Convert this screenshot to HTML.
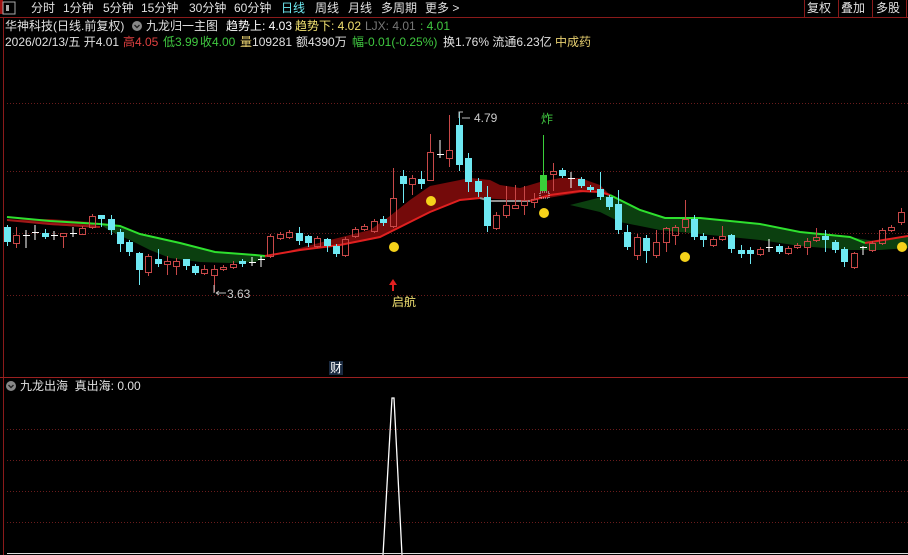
<!DOCTYPE html>
<html><head><meta charset="utf-8"><style>
html,body{margin:0;padding:0;background:#000;width:908px;height:555px;overflow:hidden}
body{position:relative;font-family:"Liberation Sans","Noto Sans CJK SC",sans-serif;font-size:12px;color:#e0e0e0}
.t{position:absolute;white-space:nowrap;line-height:14px}
svg{position:absolute;left:0;top:0}
</style></head><body>
<svg id="s" width="908" height="555" xmlns="http://www.w3.org/2000/svg">
<line x1="0" y1="17.5" x2="908" y2="17.5" stroke="#8a1a1a"/>
<line x1="3.5" y1="18" x2="3.5" y2="555" stroke="#8a1a1a"/>
<line x1="0" y1="377.5" x2="908" y2="377.5" stroke="#9a2020"/>
<line x1="804.5" y1="0" x2="804.5" y2="17" stroke="#8a1a1a"/>
<line x1="838.5" y1="0" x2="838.5" y2="17" stroke="#8a1a1a"/>
<line x1="872.5" y1="0" x2="872.5" y2="17" stroke="#8a1a1a"/>
<line x1="906.5" y1="0" x2="906.5" y2="17" stroke="#8a1a1a"/>
<g stroke="#6a1c1c" stroke-dasharray="1,2">
<line x1="7" y1="103.5" x2="908" y2="103.5"/>
<line x1="7" y1="171.5" x2="908" y2="171.5"/>
<line x1="7" y1="233.5" x2="908" y2="233.5"/>
<line x1="7" y1="295.5" x2="908" y2="295.5"/>
<line x1="7" y1="429.5" x2="908" y2="429.5"/>
<line x1="7" y1="460.5" x2="908" y2="460.5"/>
<line x1="7" y1="491.5" x2="908" y2="491.5"/>
<line x1="7" y1="522.5" x2="908" y2="522.5"/>
</g>
<rect x="0" y="0" width="3" height="14" fill="#a01010"/>
<polygon fill="#0b3f0f" points="100,224 120,226 140,234 180,243 215,252 255,255 270,256 255,262 230,263 200,262 170,258 150,250 130,240 110,231"/>
<polygon fill="#0b3f0f" points="610,195 640,210 665,218 700,218 760,224 800,232 850,237 880,242 908,236 908,248 880,250 850,250 800,246 760,240 700,234 660,230 620,222 600,212 570,205"/>
<polygon fill="#740a0a" points="270,256 300,250 340,245 380,237 410,222 430,212 460,200 480,198 530,201 560,196 590,191 610,195 600,185 580,178 560,178 540,182 520,188 500,185 490,180 470,178 450,182 430,186 410,200 390,216 370,230 330,240 300,248"/>
<polygon fill="#740a0a" points="7,220 50,225 100,228 90,222 50,219"/>
<polyline fill="none" stroke="#a01818" stroke-width="2" points="7,220 50,224 100,227"/>
<polyline fill="none" stroke="#2ee02e" stroke-width="2" points="7,217 50,221 100,224 120,226 140,234 180,243 215,252 255,255 265,256"/>
<polyline fill="none" stroke="#e02020" stroke-width="2" points="265,256 300,250 340,245 380,237 410,222 430,212 460,200 480,198"/>
<polyline fill="none" stroke="#909090" stroke-width="2" points="480,198 490,201 530,201"/>
<polyline fill="none" stroke="#e02020" stroke-width="2" points="530,201 550,195 580,191 600,192 610,195"/>
<polyline fill="none" stroke="#2ee02e" stroke-width="2" points="610,195 640,210 665,218 700,218 760,224 800,232 850,237 865,243"/>
<polyline fill="none" stroke="#e02020" stroke-width="2" points="865,243 908,236"/>
<g id="c"></g>
<g fill="#f5d21a"><circle cx="394" cy="247" r="5"/><circle cx="431" cy="201" r="5"/><circle cx="544" cy="213" r="5"/><circle cx="685" cy="257" r="5"/><circle cx="902" cy="247" r="5"/></g>
<path d="M393 279 L389 285 L392 285 L392 291 L394 291 L394 285 L397 285 Z" fill="#e02020"/>
<rect x="540" y="192" width="9" height="6" fill="none" stroke="#ddd" stroke-dasharray="1,1"/>
<path d="M214 293 L214 285 M216 293 L226 293 M216 293 L219 291 M216 293 L219 295" stroke="#bbb" fill="none"/>
<path d="M459 118 L459 112 L463 112 M462 118 L470 118" stroke="#bbb" fill="none"/>
<polyline fill="none" stroke="#fff" stroke-width="1.3" points="383,555 392,398 394,398 402,555"/>
<line x1="7" y1="553.5" x2="908" y2="553.5" stroke="#ddd"/>
<circle cx="11" cy="386" r="5" fill="#888"/>
<path d="M8.5 385 L11 387.5 L13.5 385" stroke="#222" stroke-width="1.4" fill="none"/>
<circle cx="137" cy="26" r="5" fill="#888"/>
<path d="M134.5 25 L137 27.5 L139.5 25" stroke="#222" stroke-width="1.4" fill="none"/>
<rect x="3" y="2" width="12" height="12" fill="none" stroke="#aaa"/>
<rect x="6" y="5" width="3" height="6" fill="#aaa"/>
<rect x="329" y="361" width="14" height="14" fill="#1a2a40"/>
</svg>
<div class="t" style="left:31px;top:1px">分时</div>
<div class="t" style="left:63px;top:1px">1分钟</div>
<div class="t" style="left:103px;top:1px">5分钟</div>
<div class="t" style="left:141px;top:1px">15分钟</div>
<div class="t" style="left:189px;top:1px">30分钟</div>
<div class="t" style="left:234px;top:1px">60分钟</div>
<div class="t" style="left:281px;top:1px;color:#6ee8f0">日线</div>
<div class="t" style="left:315px;top:1px">周线</div>
<div class="t" style="left:348px;top:1px">月线</div>
<div class="t" style="left:381px;top:1px">多周期</div>
<div class="t" style="left:425px;top:1px">更多 &gt;</div>
<div class="t" style="left:807px;top:1px">复权</div>
<div class="t" style="left:841px;top:1px">叠加</div>
<div class="t" style="left:876px;top:1px">多股</div>

<div class="t" style="left:5px;top:19px">华神科技(日线.前复权)</div>
<div class="t" style="left:146px;top:19px">九龙归一主图</div>
<div class="t" style="left:226px;top:19px;color:#fff">趋势上: 4.03</div>
<div class="t" style="left:295px;top:19px;color:#f0e070">趋势下: <span>4.02</span></div>
<div class="t" style="left:365px;top:19px;color:#777">LJX: 4.01</div>
<div class="t" style="left:420px;top:19px;color:#40c840">: 4.01</div>

<div class="t" style="left:5px;top:35px">2026/02/13/五 开4.01</div>
<div class="t" style="left:123px;top:35px;color:#e04040">高4.05</div>
<div class="t" style="left:163px;top:35px;color:#40c840">低3.99</div>
<div class="t" style="left:200px;top:35px;color:#40c840">收4.00</div>
<div class="t" style="left:240px;top:35px;color:#e8d070">量<span style="color:#e0e0e0">109281</span></div>
<div class="t" style="left:296px;top:35px">额4390万</div>
<div class="t" style="left:352px;top:35px;color:#40c840">幅-0.01(-0.25%)</div>
<div class="t" style="left:443px;top:35px">换1.76% 流通6.23亿</div>
<div class="t" style="left:555px;top:35px;color:#e8d070">中成药</div>

<div class="t" style="left:474px;top:111px;color:#ccc">4.79</div>
<div class="t" style="left:541px;top:112px;color:#40c840">炸</div>
<div class="t" style="left:227px;top:287px;color:#ccc">3.63</div>
<div class="t" style="left:392px;top:295px;color:#f0e070">启航</div>
<div class="t" style="left:330px;top:361px;color:#fff">财</div>
<div class="t" style="left:20px;top:379px">九龙出海&nbsp; 真出海: 0.00</div>
<script>
var C=[[7,227,242,225,246,'c'],[16,235,243,227,248,'r'],[26,235,235,230,248,'w'],[35,232,232,225,240,'w'],[45,233,237,229,239,'c'],[54,235,235,231,240,'w'],[63,233,236,233,248,'r'],[73,233,233,227,237,'w'],[82,228,234,226,235,'r'],[92,216,227,214,229,'r'],[101,215,219,215,227,'c'],[111,219,230,215,235,'c'],[120,232,244,229,252,'c'],[129,242,252,240,256,'c'],[139,253,270,252,285,'c'],[148,256,272,254,276,'r'],[158,259,264,249,267,'c'],[167,261,264,256,275,'r'],[176,261,266,258,275,'r'],[186,259,266,259,270,'c'],[195,266,273,264,275,'c'],[204,269,273,265,275,'r'],[214,269,275,265,292,'r'],[223,267,269,265,271,'r'],[233,264,267,261,269,'r'],[242,261,264,259,267,'c'],[252,262,262,257,266,'w'],[261,259,259,256,267,'w'],[270,236,256,234,258,'r'],[280,234,238,232,240,'r'],[289,232,237,230,239,'r'],[299,233,241,227,245,'c'],[308,236,243,235,247,'c'],[317,238,246,236,248,'r'],[327,239,246,238,252,'c'],[336,246,254,244,257,'c'],[345,239,255,237,257,'r'],[355,229,236,227,238,'r'],[364,226,229,224,231,'r'],[374,221,231,219,233,'r'],[383,219,223,216,226,'c'],[393,198,226,168,228,'r'],[403,176,184,170,203,'c'],[412,178,184,175,195,'r'],[421,179,184,171,189,'c'],[430,152,180,134,180,'r'],[440,154,154,140,158,'w'],[449,150,158,115,167,'r'],[459,125,165,112,171,'c'],[468,158,182,153,192,'c'],[478,181,192,178,197,'c'],[487,197,226,186,232,'c'],[496,215,228,212,230,'r'],[506,205,215,186,218,'r'],[515,205,208,185,209,'r'],[524,200,205,186,215,'r'],[534,199,202,193,208,'r'],[543,175,191,135,191,'g'],[553,171,174,163,191,'r'],[562,170,176,168,178,'c'],[571,178,178,172,188,'w'],[581,179,186,177,188,'c'],[590,187,190,185,192,'c'],[600,189,197,172,200,'c'],[609,197,207,195,210,'c'],[618,204,230,190,234,'c'],[627,232,247,225,250,'c'],[637,237,255,234,260,'r'],[646,238,251,235,263,'c'],[656,242,255,230,258,'r'],[666,228,242,227,252,'r'],[675,227,235,225,245,'r'],[685,219,227,200,232,'r'],[694,219,237,215,240,'c'],[703,236,240,233,247,'c'],[713,239,245,237,247,'r'],[722,236,239,226,241,'r'],[731,235,249,234,253,'c'],[741,250,254,245,258,'c'],[750,250,254,247,264,'c'],[760,249,254,247,256,'r'],[769,247,247,239,252,'w'],[779,246,252,244,254,'c'],[788,248,253,246,255,'r'],[797,245,247,243,249,'r'],[807,241,247,238,255,'r'],[816,237,240,228,242,'r'],[825,236,240,230,252,'c'],[835,242,250,240,253,'c'],[844,249,262,247,267,'c'],[854,253,267,252,269,'r'],[863,247,247,246,255,'w'],[872,243,250,241,252,'r'],[882,230,243,228,245,'r'],[891,227,230,225,232,'r'],[901,212,222,208,225,'r']];
var h='';C.forEach(function(k){var x=k[0],a=k[1],b=k[2],hi=k[3],lo=k[4],t=k[5];
if(t=='w'){h+='<line x1="'+x+'" y1="'+hi+'" x2="'+x+'" y2="'+lo+'" stroke="#fff"/><line x1="'+(x-3)+'" y1="'+(a+.5)+'" x2="'+(x+4)+'" y2="'+(a+.5)+'" stroke="#fff"/>';}
else if(t=='r'){h+='<line x1="'+(x+.5)+'" y1="'+hi+'" x2="'+(x+.5)+'" y2="'+a+'" stroke="#c84848"/><line x1="'+(x+.5)+'" y1="'+b+'" x2="'+(x+.5)+'" y2="'+lo+'" stroke="#c84848"/><rect x="'+(x-2.5)+'" y="'+(a+.5)+'" width="6" height="'+Math.max(b-a,1)+'" fill="none" stroke="#c84848"/>';}
else{var col=t=='g'?'#3ad03a':'#6ee8f2';h+='<line x1="'+(x+.5)+'" y1="'+hi+'" x2="'+(x+.5)+'" y2="'+lo+'" stroke="'+col+'"/><rect x="'+(x-3)+'" y="'+a+'" width="7" height="'+Math.max(b-a,2)+'" fill="'+col+'"/>';}});
document.getElementById('c').innerHTML=h;
</script>
</body></html>
